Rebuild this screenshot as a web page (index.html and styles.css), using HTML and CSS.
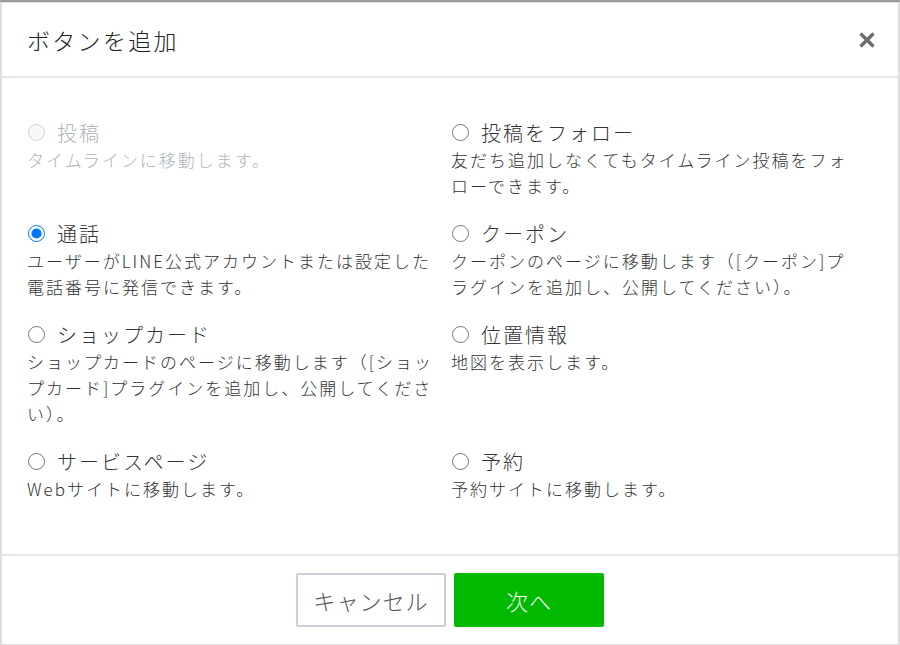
FILE: index.html
```html
<!DOCTYPE html>
<html lang="ja">
<head>
<meta charset="utf-8">
<title>ボタンを追加</title>
<link rel="stylesheet" href="styles.css">
</head>
<body>
<div class="modal">
  <div class="modal-header">
    <h1 class="modal-title">ボタンを追加</h1>
    <button class="close" type="button" aria-label="閉じる">
      <svg width="18" height="18" viewBox="0 0 18 18"><path d="M2.5 2.5 L15.5 15.5 M15.5 2.5 L2.5 15.5" stroke="#6b6b6b" stroke-width="3.4" stroke-linecap="butt"/></svg>
    </button>
  </div>
  <div class="modal-body">
    <div class="options">
      <label class="option disabled">
        <span class="opt-title"><input type="radio" name="btn" disabled><span>投稿</span></span>
        <span class="opt-desc">タイムラインに移動します。</span>
      </label>
      <label class="option">
        <span class="opt-title"><input type="radio" name="btn"><span>投稿をフォロー</span></span>
        <span class="opt-desc">友だち追加しなくてもタイムライン投稿をフォローできます。</span>
      </label>
      <label class="option">
        <span class="opt-title"><input type="radio" name="btn" checked><span>通話</span></span>
        <span class="opt-desc">ユーザーがLINE公式アカウントまたは設定した電話番号に発信できます。</span>
      </label>
      <label class="option">
        <span class="opt-title"><input type="radio" name="btn"><span>クーポン</span></span>
        <span class="opt-desc">クーポンのページに移動します（[クーポン]プラグインを追加し、公開してください）。</span>
      </label>
      <label class="option">
        <span class="opt-title"><input type="radio" name="btn"><span>ショップカード</span></span>
        <span class="opt-desc">ショップカードのページに移動します（[ショップカード]プラグインを追加し、公開してください）。</span>
      </label>
      <label class="option">
        <span class="opt-title"><input type="radio" name="btn"><span>位置情報</span></span>
        <span class="opt-desc">地図を表示します。</span>
      </label>
      <label class="option">
        <span class="opt-title"><input type="radio" name="btn"><span>サービスページ</span></span>
        <span class="opt-desc">Webサイトに移動します。</span>
      </label>
      <label class="option">
        <span class="opt-title"><input type="radio" name="btn"><span>予約</span></span>
        <span class="opt-desc">予約サイトに移動します。</span>
      </label>
    </div>
  </div>
  <div class="modal-footer">
    <button class="btn btn-cancel" type="button">キャンセル</button>
    <button class="btn btn-next" type="button">次へ</button>
  </div>
</div>
</body>
</html>
```
FILE: styles.css
```css
html, body {
  margin: 0;
  padding: 0;
}
body {
  background: #dedede;
  border-top: 2px solid #9c9c9c;
  padding: 1px 2px 0 2px;
  height: 645px;
  box-sizing: border-box;
  font-family: "Noto Sans CJK JP", "Noto Sans", sans-serif;
  font-weight: 300;
  color: #333;
}
.modal {
  width: 896px;
  height: 641px;
  background: #fff;
  display: flex;
  flex-direction: column;
}
.modal-header {
  height: 73px;
  border-bottom: 2px solid #e3e5e8;
  display: flex;
  align-items: center;
  justify-content: space-between;
  padding: 0 22px 0 25px;
}
.modal-title {
  margin: 0;
  font-size: 23px;
  font-weight: 300;
  letter-spacing: 2.3px;
  color: #222;
}
.close {
  border: 0;
  background: none;
  padding: 0;
  width: 18px;
  height: 18px;
  display: flex;
}
.modal-body {
  flex: 1;
  padding: 40px 0 0 25px;
  border-bottom: 2px solid #e3e5e8;
}
.options {
  display: grid;
  grid-template-columns: 408px 408px;
  column-gap: 16px;
}
.option {
  display: flex;
  flex-direction: column;
  margin-bottom: 20px;
}
.opt-title {
  display: flex;
  align-items: center;
  height: 28px;
  margin-bottom: 1px;
  font-size: 20px;
  letter-spacing: 2px;
  color: #333;
}
.opt-title input {
  width: 17px;
  height: 17px;
  margin: 0 12px 0 1px;
}
.opt-desc {
  font-size: 17px;
  line-height: 26px;
  letter-spacing: 2px;
  color: #333;
}
.option.disabled .opt-title,
.option.disabled .opt-desc {
  color: #aeb4bb;
}
.modal-footer {
  height: 88px;
  display: flex;
  justify-content: center;
  align-items: center;
  gap: 8px;
}
.btn {
  width: 150px;
  height: 54px;
  font-family: "Noto Sans CJK JP", "Noto Sans", sans-serif;
  font-weight: 300;
  font-size: 22px;
  letter-spacing: 1px;
  border-radius: 2px;
  cursor: pointer;
}
.btn-cancel {
  background: #fff;
  border: 2px solid #cdd1d9;
  color: #555;
}
.btn-next {
  background: #00b900;
  border: 0;
  color: #fff;
}
```
